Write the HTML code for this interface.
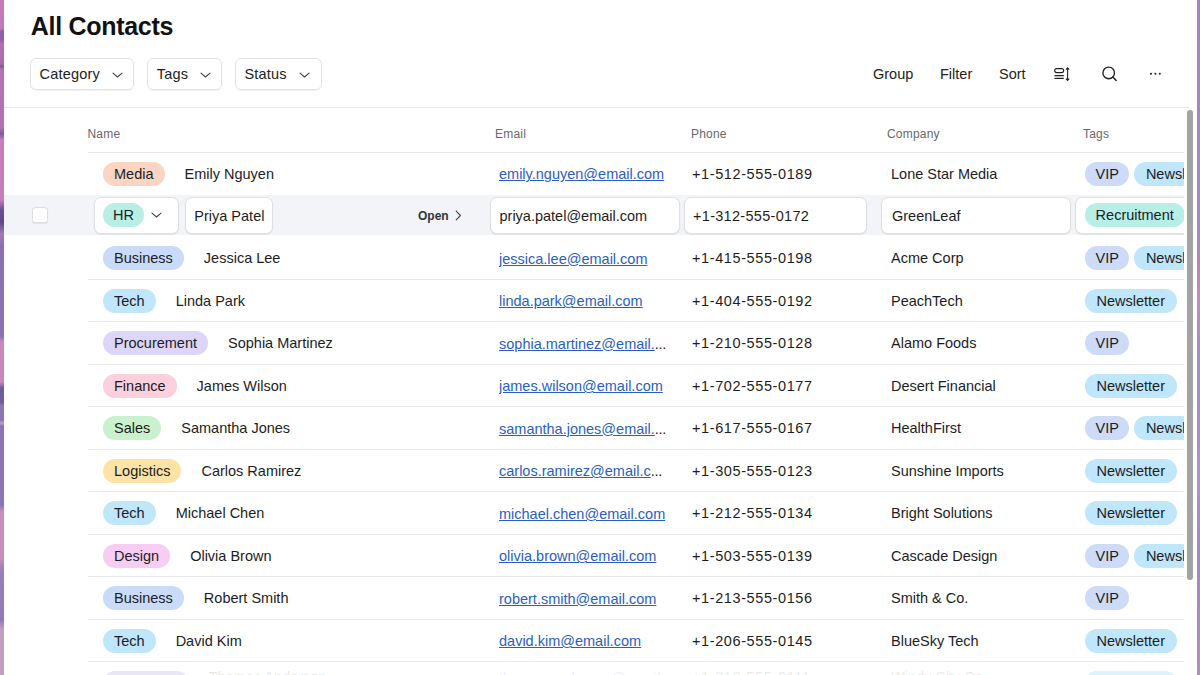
<!DOCTYPE html>
<html><head><meta charset="utf-8">
<style>
*{box-sizing:border-box;margin:0;padding:0}
html,body{width:1200px;height:675px;overflow:hidden}
body{font-family:"Liberation Sans",sans-serif;color:#1d1d1f;position:relative;
background:linear-gradient(180deg,#c47cb8 0px,#c27ab6 28px,#8c5fa6 32px,#8f62a8 40px,#b070b0 44px,#a86cae 64px,#7e5a9e 66px,#b274b2 70px,#b072b0 128px,#7e5a9e 134px,#c580b8 140px,#c37fb6 200px,#6a4f92 210px,#5e4a8a 222px,#a27ab0 234px,#8a70b0 246px,#8a72b2 336px,#c88ab8 342px,#c689b8 382px,#6e5a9e 388px,#6e5a9e 402px,#8a76b4 406px,#8a76b4 420px,#c0a0c8 423px,#8a76b4 426px,#8a76b4 505px,#c890b8 512px,#c890b8 558px,#9a80b8 570px,#8f7ab8 620px,#c4a0c0 630px,#c4a0c0 675px)}
.rightedge{position:absolute;left:1197px;top:0;width:3px;height:675px;background:linear-gradient(180deg,#9d88c2 0px,#a08ac4 220px,#b784b8 260px,#c08ac0 300px,#a48cc4 360px,#b090c8 480px,#a088c0 560px,#b48cc0 675px)}
.card{position:absolute;left:4px;top:0;width:1193px;height:675px;background:#fff;overflow:hidden}
.title{position:absolute;left:26.8px;top:11.6px;font-size:25px;font-weight:bold;color:#111;letter-spacing:-0.3px}
.fbtn{position:absolute;top:58px;height:31.5px;border:1px solid #e3e3e5;border-radius:6px;box-shadow:0 1px 1.5px rgba(0,0,0,0.06);font-size:14.5px;color:#222;display:flex;align-items:center;padding-left:9px}
.fbtn svg{position:absolute;top:13px}
.fbtn{letter-spacing:0.2px}
.tool{position:absolute;top:66px;font-size:14.5px;color:#222}
.topline{position:absolute;left:0;top:106.5px;width:1185px;height:1px;background:#e6e6e8}
.hdr{position:absolute;top:127.2px;font-size:12px;color:#67676b;letter-spacing:0.2px}
.hdrline{position:absolute;left:84px;top:152px;width:1096px;height:1px;background:#e6e6e8}
.row{position:absolute;left:0;width:1180px;height:42.5px}
.row .line{position:absolute;left:84px;right:0;bottom:0;height:1px;background:#e8e8ea}
.cell{position:absolute;top:0;height:42px;display:flex;align-items:center;font-size:14.5px;white-space:nowrap;overflow:hidden}
.c-name{left:99px;width:390px}
.c-email{left:495px;width:168px}
.c-email{padding-top:1.4px}
.c-email a{color:#2a5fc0;text-decoration:underline;text-underline-offset:1.2px}
.ell{color:#222;letter-spacing:-0.3px}
.c-phone{left:688px;width:190px}
.c-comp{left:887px;width:190px}
.c-tags{left:1081px;width:99px}
.pill{display:inline-block;height:24px;line-height:24px;border-radius:12px;padding:0 11px;font-size:14.5px;color:#1c1c1e;flex-shrink:0}
.c-tags .pill{margin-right:5px;padding:0 10.5px}
.t-news{padding:0 11.5px!important}
.nm{margin-left:20px}
.c-media{background:#fbd5c2}
.c-hr{background:#b7eee6}
.c-bus{background:#cadbf9}
.c-tech{background:#bfe6fa}
.c-proc{background:#ddd6f8}
.c-fin{background:#fccfdc}
.c-sales{background:#c9f1cd}
.c-log{background:#fde3a6}
.c-design{background:#f7cdf4}
.c-mkt{background:#d4d0ec}
.t-vip{background:#cddbf8}
.t-news{background:#bfe6fa}
.t-rec{background:#b7eee6}
.sel .selbg{position:absolute;left:0;top:0.9px;width:1180px;height:39.7px;background:#f2f4f8}
.cb{position:absolute;left:28px;top:12.5px;width:16px;height:16px;border:1px solid #dcdcde;border-radius:3.5px;background:#fff;box-shadow:0 0.5px 1px rgba(0,0,0,0.08)}
.box{position:absolute;top:2.7px;height:36.5px;background:#fff;border:1px solid #dfe0e3;border-radius:7px;box-shadow:0 1px 1.5px rgba(0,0,0,0.07);display:flex;align-items:center;font-size:14.5px;white-space:nowrap;overflow:hidden}
.catbox{left:90px;width:85px;padding-left:8px}
.catbox .pill{padding:0 10px}
.catbox .chev{margin-left:7px}
.emailbox,.phonebox,.compbox,.namebox{padding-top:1.2px}
.namebox{left:181px;width:88px;padding-left:8.3px}
.open{position:absolute;left:414px;top:0;height:42px;display:flex;align-items:center;font-size:12px;font-weight:bold;color:#333}
.open svg{margin-left:6px}
.emailbox{left:485.5px;width:190px;padding-left:9px}
.phonebox{left:679.5px;width:183.5px;padding-left:8.5px;letter-spacing:0.3px!important}
.compbox{left:877px;width:190px;padding-left:10px}
.tagbox{left:1071.3px;width:120px;padding-left:8.3px}
.scroll{position:absolute;left:1183px;top:110px;width:6px;height:470px;border-radius:3px;background:#a3a3a3}
.fade{display:none}
.clip{position:absolute;left:0;top:0;width:1180px;height:675px;overflow:hidden}
.c-phone,.phonebox{letter-spacing:0.6px}
.faded{opacity:0.5}
.faded .nm,.faded .c-email a,.faded .ell{position:relative;top:-6px;opacity:0.2}
.faded .c-phone,.faded .c-comp{padding-bottom:12px;color:rgba(29,29,31,0.2)}
</style></head><body>
<div class="card">
  <div class="title">All Contacts</div>
  <div class="fbtn" style="left:26px;width:104px;padding-left:8.6px">Category<svg width="11" height="6" viewBox="0 0 11 6" style="left:81px"><path d="M1 1.1 L5.5 5 L10 1.1" fill="none" stroke="#444" stroke-width="1.1" stroke-linecap="round" stroke-linejoin="round"/></svg></div>
  <div class="fbtn" style="left:143.2px;width:75.3px;padding-left:8.6px">Tags<svg width="11" height="6" viewBox="0 0 11 6" style="left:51.5px"><path d="M1 1.1 L5.5 5 L10 1.1" fill="none" stroke="#444" stroke-width="1.1" stroke-linecap="round" stroke-linejoin="round"/></svg></div>
  <div class="fbtn" style="left:230.5px;width:87px">Status<svg width="11" height="6" viewBox="0 0 11 6" style="left:63.5px"><path d="M1 1.1 L5.5 5 L10 1.1" fill="none" stroke="#444" stroke-width="1.1" stroke-linecap="round" stroke-linejoin="round"/></svg></div>
  <div class="tool" style="left:869px">Group</div>
  <div class="tool" style="left:936px">Filter</div>
  <div class="tool" style="left:995px">Sort</div>
  <svg style="position:absolute;left:1048px;top:66px" width="20" height="16" viewBox="0 0 20 16">
    <rect x="2.7" y="2.6" width="9" height="4" rx="2" fill="none" stroke="#222" stroke-width="1.1"/>
    <path d="M2.5 9.7 H11.8 M2.5 12.4 H11.8" stroke="#222" stroke-width="1.2"/>
    <path d="M15.6 2.2 V14" stroke="#222" stroke-width="1.1"/>
    <path d="M14 3.6 L15.6 1.8 L17.2 3.6 M14 12.6 L15.6 14.4 L17.2 12.6" fill="none" stroke="#222" stroke-width="1.1"/>
  </svg>
  <svg style="position:absolute;left:1096px;top:64px" width="18" height="18" viewBox="0 0 18 18">
    <circle cx="8.7" cy="8.9" r="5.8" fill="none" stroke="#222" stroke-width="1.4"/>
    <path d="M12.9 13.1 L16.2 16.5" stroke="#222" stroke-width="1.4" stroke-linecap="round"/>
  </svg>
  <svg style="position:absolute;left:1144px;top:68px" width="16" height="10" viewBox="0 0 16 10">
    <circle cx="3" cy="5.8" r="1.05" fill="#222"/><circle cx="7.4" cy="5.8" r="1.05" fill="#222"/><circle cx="11.8" cy="5.8" r="1.05" fill="#222"/>
  </svg>
  <div class="topline"></div>
  <div class="hdr" style="left:83.5px">Name</div>
  <div class="hdr" style="left:491px">Email</div>
  <div class="hdr" style="left:687px">Phone</div>
  <div class="hdr" style="left:883px">Company</div>
  <div class="hdr" style="left:1079px">Tags</div>
  <div class="hdrline"></div>
  <div class="clip"><div class="row" style="top:152.8px">
  
  <div class="cell c-name"><span class="pill c-media">Media</span><span class="nm">Emily Nguyen</span></div>
  <div class="cell c-email"><a>emily.nguyen@email.com</a></div>
  <div class="cell c-phone">+1-512-555-0189</div>
  <div class="cell c-comp">Lone Star Media</div>
  <div class="cell c-tags"><span class="pill t-vip">VIP</span><span class="pill t-news">Newsletter</span></div>
</div><div class="row sel" style="top:194.5px">
  <div class="selbg"></div>
  <div class="cb"></div>
  <div class="box catbox"><span class="pill c-hr">HR</span><svg class="chev" width="11" height="6" viewBox="0 0 11 6"><path d="M1 1.1 L5.5 5 L10 1.1" fill="none" stroke="#444" stroke-width="1.1" stroke-linecap="round" stroke-linejoin="round"/></svg></div>
  <div class="box namebox">Priya Patel</div>
  <div class="open">Open<svg width="7" height="11" viewBox="0 0 7 11"><path d="M1.2 1.2 L5.4 5.5 L1.2 9.8" fill="none" stroke="#444" stroke-width="1.1" stroke-linecap="round" stroke-linejoin="round"/></svg></div>
  <div class="box emailbox">priya.patel@email.com</div>
  <div class="box phonebox">+1-312-555-0172</div>
  <div class="box compbox">GreenLeaf</div>
  <div class="box tagbox"><span class="pill t-rec">Recruitment</span></div>
</div><div class="row" style="top:237.0px">
  <div class="line"></div>
  <div class="cell c-name"><span class="pill c-bus">Business</span><span class="nm">Jessica Lee</span></div>
  <div class="cell c-email"><a>jessica.lee@email.com</a></div>
  <div class="cell c-phone">+1-415-555-0198</div>
  <div class="cell c-comp">Acme Corp</div>
  <div class="cell c-tags"><span class="pill t-vip">VIP</span><span class="pill t-news">Newsletter</span></div>
</div><div class="row" style="top:279.5px">
  <div class="line"></div>
  <div class="cell c-name"><span class="pill c-tech">Tech</span><span class="nm">Linda Park</span></div>
  <div class="cell c-email"><a>linda.park@email.com</a></div>
  <div class="cell c-phone">+1-404-555-0192</div>
  <div class="cell c-comp">PeachTech</div>
  <div class="cell c-tags"><span class="pill t-news">Newsletter</span></div>
</div><div class="row" style="top:322.0px">
  <div class="line"></div>
  <div class="cell c-name"><span class="pill c-proc">Procurement</span><span class="nm">Sophia Martinez</span></div>
  <div class="cell c-email"><a>sophia.martinez@email.</a><span class="ell">...</span></div>
  <div class="cell c-phone">+1-210-555-0128</div>
  <div class="cell c-comp">Alamo Foods</div>
  <div class="cell c-tags"><span class="pill t-vip">VIP</span></div>
</div><div class="row" style="top:364.5px">
  <div class="line"></div>
  <div class="cell c-name"><span class="pill c-fin">Finance</span><span class="nm">James Wilson</span></div>
  <div class="cell c-email"><a>james.wilson@email.com</a></div>
  <div class="cell c-phone">+1-702-555-0177</div>
  <div class="cell c-comp">Desert Financial</div>
  <div class="cell c-tags"><span class="pill t-news">Newsletter</span></div>
</div><div class="row" style="top:407.0px">
  <div class="line"></div>
  <div class="cell c-name"><span class="pill c-sales">Sales</span><span class="nm">Samantha Jones</span></div>
  <div class="cell c-email"><a>samantha.jones@email.</a><span class="ell">...</span></div>
  <div class="cell c-phone">+1-617-555-0167</div>
  <div class="cell c-comp">HealthFirst</div>
  <div class="cell c-tags"><span class="pill t-vip">VIP</span><span class="pill t-news">Newsletter</span></div>
</div><div class="row" style="top:449.5px">
  <div class="line"></div>
  <div class="cell c-name"><span class="pill c-log">Logistics</span><span class="nm">Carlos Ramirez</span></div>
  <div class="cell c-email"><a>carlos.ramirez@email.c</a><span class="ell">...</span></div>
  <div class="cell c-phone">+1-305-555-0123</div>
  <div class="cell c-comp">Sunshine Imports</div>
  <div class="cell c-tags"><span class="pill t-news">Newsletter</span></div>
</div><div class="row" style="top:492.0px">
  <div class="line"></div>
  <div class="cell c-name"><span class="pill c-tech">Tech</span><span class="nm">Michael Chen</span></div>
  <div class="cell c-email"><a>michael.chen@email.com</a></div>
  <div class="cell c-phone">+1-212-555-0134</div>
  <div class="cell c-comp">Bright Solutions</div>
  <div class="cell c-tags"><span class="pill t-news">Newsletter</span></div>
</div><div class="row" style="top:534.5px">
  <div class="line"></div>
  <div class="cell c-name"><span class="pill c-design">Design</span><span class="nm">Olivia Brown</span></div>
  <div class="cell c-email"><a>olivia.brown@email.com</a></div>
  <div class="cell c-phone">+1-503-555-0139</div>
  <div class="cell c-comp">Cascade Design</div>
  <div class="cell c-tags"><span class="pill t-vip">VIP</span><span class="pill t-news">Newsletter</span></div>
</div><div class="row" style="top:577.0px">
  <div class="line"></div>
  <div class="cell c-name"><span class="pill c-bus">Business</span><span class="nm">Robert Smith</span></div>
  <div class="cell c-email"><a>robert.smith@email.com</a></div>
  <div class="cell c-phone">+1-213-555-0156</div>
  <div class="cell c-comp">Smith & Co.</div>
  <div class="cell c-tags"><span class="pill t-vip">VIP</span></div>
</div><div class="row" style="top:619.5px">
  <div class="line"></div>
  <div class="cell c-name"><span class="pill c-tech">Tech</span><span class="nm">David Kim</span></div>
  <div class="cell c-email"><a>david.kim@email.com</a></div>
  <div class="cell c-phone">+1-206-555-0145</div>
  <div class="cell c-comp">BlueSky Tech</div>
  <div class="cell c-tags"><span class="pill t-news">Newsletter</span></div>
</div><div class="row faded" style="top:662.0px">
  
  <div class="cell c-name"><span class="pill c-mkt">Marketing</span><span class="nm">Thomas Anderson</span></div>
  <div class="cell c-email"><a>thomas.anderson@email.</a><span class="ell">...</span></div>
  <div class="cell c-phone">+1-312-555-0111</div>
  <div class="cell c-comp">Windy City Co</div>
  <div class="cell c-tags"><span class="pill t-news">Newsletter</span></div>
</div></div>
  <div class="fade"></div>
  <div class="scroll"></div>
</div>
<div class="rightedge"></div>
</body></html>
